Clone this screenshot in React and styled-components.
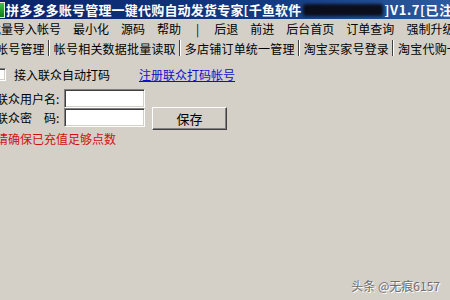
import React from 'react';
import styled, {createGlobalStyle} from 'styled-components';

const GlobalStyle = createGlobalStyle`
  html, body {
    margin: 0;
    padding: 0;
    background: #d4d0c8;
  }
  body {
    font-family: "Noto Sans CJK SC", "Liberation Sans", sans-serif;
  }
`;

const Window = styled.div`
  position: relative;
  width: 450px;
  height: 300px;
  overflow: hidden;
  background: #d4d0c8;
  font-size: 12px;
  color: #000;
`;

const TitleBar = styled.div`
  height: 19px;
  display: flex;
  align-items: center;
  background: linear-gradient(to right, #0a246a 0%, #123a82 60%, #2c5a9e 100%);
  color: #fff;
  font-weight: bold;
  font-size: 13px;
  letter-spacing: 0.2px;
  white-space: nowrap;
`;

const AppIcon = styled.div`
  width: 16px;
  height: 14px;
  margin-left: -13px;
  margin-right: 1px;
  background: linear-gradient(#3fc24a, #0e7a1c);
  border: 1px solid #dff5d0;
  flex: none;
`;

const Redacted = styled.span`
  display: inline-block;
  width: 80px;
  height: 12px;
  margin: 0 2px 0 1px;
  background: #0b0f1c;
  border-radius: 3px;
  filter: blur(1.5px);
  flex: none;
`;

const Version = styled.span`
  letter-spacing: 0.6px;
`;

const MenuBar = styled.div`
  height: 19px;
  display: flex;
  align-items: center;
  gap: 12px;
  margin-left: -11px;
  white-space: nowrap;
`;

const MenuItem = styled.span`
  flex: none;
  margin: ${p => (p.$sep ? '0 3px' : '0')};
`;

const TabBar = styled.div`
  height: 20px;
  display: flex;
  align-items: center;
  margin-left: -4px;
  white-space: nowrap;
`;

const Tab = styled.span`
  flex: none;
  padding: 0 3px 0 4px;
  letter-spacing: 0.2px;
  &:first-child {
    padding-left: 0;
  }
`;

const TabSep = styled.span`
  flex: none;
  width: 1px;
  height: 16px;
  background: #404040;
  border-right: 1px solid #fff;
`;

const Content = styled.div`
  padding-top: 8px;
  margin-left: -4px;
  display: flex;
  flex-direction: column;
`;

const CheckRow = styled.div`
  height: 16px;
  display: flex;
  align-items: center;
`;

const CheckBox = styled.span`
  flex: none;
  width: 11px;
  height: 11px;
  margin-left: -3px;
  margin-right: 8px;
  background: #fff;
  border: 1px solid;
  border-color: #808080 #fff #fff #808080;
  box-shadow: inset 1px 1px #404040, inset -1px -1px #d4d0c8;
`;

const LinkText = styled.a`
  margin-left: 29px;
  color: #1010c8;
  text-decoration: underline;
  cursor: pointer;
`;

const Form = styled.div`
  margin-top: 7px;
  display: grid;
  grid-template-columns: 68px 81px 75px;
  grid-template-rows: 19px 19px;
  column-gap: 0;
  align-items: center;
`;

const Label = styled.span`
  white-space: pre;
  grid-column: 1;
  grid-row: ${p => p.$row};
`;

const Input = styled.input`
  grid-column: 2;
  grid-row: ${p => p.$row};
  box-sizing: border-box;
  width: 81px;
  height: 19px;
  margin: 0;
  padding: 0 2px;
  background: #fff;
  border: 1px solid;
  border-color: #808080 #fff #fff #808080;
  box-shadow: inset 1px 1px #404040, inset -1px -1px #d4d0c8;
  outline: none;
  font: inherit;
`;

const Button = styled.button`
  grid-column: 3;
  grid-row: 2;
  align-self: start;
  box-sizing: border-box;
  width: 75px;
  height: 23px;
  margin: -1px 0 0 7px;
  padding: 0;
  background: #d4d0c8;
  border: 1px solid;
  border-color: #fff #404040 #404040 #fff;
  box-shadow: inset -1px -1px #808080;
  font: inherit;
  font-size: 13px;
  color: #000;
`;

const Warning = styled.div`
  margin-top: 5px;
  color: #d01010;
  line-height: 14px;
`;

const Watermark = styled.div`
  position: absolute;
  right: 10px;
  bottom: 6px;
  color: #6e6e6e;
  font-size: 12px;
  text-shadow: 1px 1px 0 #fff;
  white-space: nowrap;
`;

const menus = ['批量导入帐号', '最小化', '源码', '帮助', '|', '后退', '前进', '后台首页', '订单查询', '强制升级'];
const tabs = ['帐号管理', '帐号相关数据批量读取', '多店铺订单统一管理', '淘宝买家号登录', '淘宝代购一键下单'];

export default function App() {
    return (
        <>
            <GlobalStyle/>
            <Window>
                <TitleBar>
                    <AppIcon/>
                    <span>拼多多多账号管理一键代购自动发货专家[千鱼软件</span>
                    <Redacted/>
                    <Version>]V1.7[已注册]</Version>
                </TitleBar>
                <MenuBar>
                    {menus.map((m, i) => <MenuItem key={i} $sep={m === '|'}>{m}</MenuItem>)}
                </MenuBar>
                <TabBar>
                    {tabs.map((t, i) => (
                        <React.Fragment key={i}>
                            <Tab>{t}</Tab>
                            <TabSep/>
                        </React.Fragment>
                    ))}
                </TabBar>
                <Content>
                    <CheckRow>
                        <CheckBox/>
                        <span>接入联众自动打码</span>
                        <LinkText>注册联众打码帐号</LinkText>
                    </CheckRow>
                    <Form>
                        <Label $row={1}>联众用户名:</Label>
                        <Input $row={1}/>
                        <Label $row={2}>联众密　码:</Label>
                        <Input $row={2} type="password"/>
                        <Button>保存</Button>
                    </Form>
                    <Warning>请确保已充值足够点数</Warning>
                </Content>
                <Watermark>头条 @无痕6157</Watermark>
            </Window>
        </>
    );
}
